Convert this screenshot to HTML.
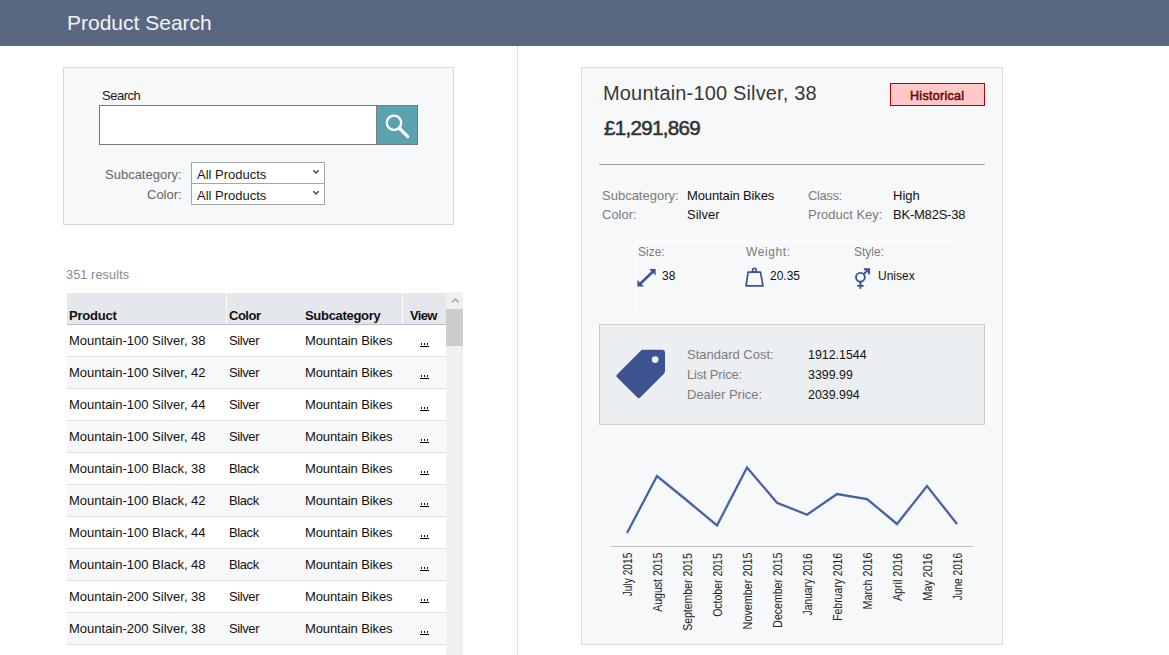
<!DOCTYPE html>
<html><head><meta charset="utf-8"><title>Product Search</title>
<style>
html,body{margin:0;padding:0;}
body{width:1169px;height:655px;overflow:hidden;position:relative;background:#fff;font-family:"Liberation Sans",sans-serif;}
.t{position:absolute;white-space:nowrap;}
.r{position:absolute;box-sizing:border-box;}
svg{position:absolute;}
</style></head><body>
<div class="r" style="left:0px;top:0px;width:1169px;height:46px;background:#5a6782;"></div>
<div class="t" style="left:67px;top:12px;font-size:21px;line-height:21px;color:#f4f4f4;font-weight:400;">Product Search</div>
<div class="r" style="left:517px;top:46px;width:1px;height:609px;background:#dcdcdc;"></div>
<div class="r" style="left:63px;top:67px;width:391px;height:158px;background:#f7f8fa;border:1px solid #d9d9d9;"></div>
<div class="t" style="left:102px;top:89px;font-size:13px;line-height:13px;color:#1a1a1a;font-weight:400;letter-spacing:-0.5px;">Search</div>
<div class="r" style="left:99px;top:105px;width:319px;height:40px;background:#fff;border:1px solid #7a7a7a;"></div>
<div class="r" style="left:376px;top:105px;width:42px;height:40px;background:#59a2ae;border:1px solid #7a7a7a;"></div>
<svg style="left:377px;top:106px" width="40" height="38" viewBox="0 0 40 38"><circle cx="17" cy="16.8" r="7.2" fill="none" stroke="#fff" stroke-width="2.4"/><line x1="22.3" y1="22.3" x2="30.8" y2="30.6" stroke="#fff" stroke-width="3.3" stroke-linecap="round"/></svg>
<div class="t" style="left:105px;top:168px;font-size:13px;line-height:13px;color:#666;font-weight:400;">Subcategory:</div>
<div class="t" style="left:147px;top:188px;font-size:13px;line-height:13px;color:#666;font-weight:400;">Color:</div>
<div class="r" style="left:191px;top:162px;width:134px;height:22px;background:#fff;border:1px solid #a6a6a6;"></div>
<div class="r" style="left:191px;top:183px;width:134px;height:22px;background:#fff;border:1px solid #a6a6a6;"></div>
<div class="t" style="left:197px;top:168px;font-size:13px;line-height:13px;color:#1a1a1a;font-weight:400;">All Products</div>
<div class="t" style="left:197px;top:189px;font-size:13px;line-height:13px;color:#1a1a1a;font-weight:400;">All Products</div>
<svg style="left:312px;top:169px" width="8" height="6" viewBox="0 0 8 6"><polyline points="1.3,1.2 4,3.9 6.7,1.2" fill="none" stroke="#444" stroke-width="1.4"/></svg>
<svg style="left:312px;top:190px" width="8" height="6" viewBox="0 0 8 6"><polyline points="1.3,1.2 4,3.9 6.7,1.2" fill="none" stroke="#444" stroke-width="1.4"/></svg>
<div class="t" style="left:66px;top:269px;font-size:12px;line-height:12px;color:#8a8a8a;font-weight:400;font-size:12.6px;letter-spacing:0.15px;">351 results</div>
<div class="r" style="left:67px;top:293px;width:379px;height:32px;background:#e4e7ec;border-bottom:1px solid #b6bfcd;"></div>
<div class="r" style="left:226px;top:293px;width:1px;height:31px;background:#fff;"></div>
<div class="r" style="left:402px;top:293px;width:1px;height:31px;background:#fff;"></div>
<div class="t" style="left:69px;top:309px;font-size:13px;line-height:13px;color:#111;font-weight:700;letter-spacing:-0.2px;">Product</div>
<div class="t" style="left:229px;top:309px;font-size:13px;line-height:13px;color:#111;font-weight:700;letter-spacing:-0.5px;">Color</div>
<div class="t" style="left:305px;top:309px;font-size:13px;line-height:13px;color:#111;font-weight:700;letter-spacing:-0.3px;">Subcategory</div>
<div class="t" style="left:410px;top:309px;font-size:13px;line-height:13px;color:#111;font-weight:700;letter-spacing:-0.7px;">View</div>
<div class="r" style="left:67px;top:325px;width:379px;height:32px;background:#ffffff;border-bottom:1px solid #e1e1e1;"></div>
<div class="t" style="left:69px;top:334px;font-size:13px;line-height:13px;color:#111;font-weight:400;">Mountain-100 Silver, 38</div>
<div class="t" style="left:229px;top:334px;font-size:13px;line-height:13px;color:#111;font-weight:400;letter-spacing:-0.4px;">Silver</div>
<div class="t" style="left:305px;top:334px;font-size:13px;line-height:13px;color:#111;font-weight:400;letter-spacing:-0.1px;">Mountain Bikes</div>
<div class="r" style="left:421px;top:343px;width:1px;height:2px;background:#300;"></div>
<div class="r" style="left:424px;top:343px;width:1px;height:2px;background:#300;"></div>
<div class="r" style="left:427px;top:343px;width:1px;height:2px;background:#300;"></div>
<div class="r" style="left:420px;top:346px;width:9px;height:1px;background:#000;"></div>
<div class="r" style="left:67px;top:357px;width:379px;height:32px;background:#f7f8fa;border-bottom:1px solid #e1e1e1;"></div>
<div class="t" style="left:69px;top:366px;font-size:13px;line-height:13px;color:#111;font-weight:400;">Mountain-100 Silver, 42</div>
<div class="t" style="left:229px;top:366px;font-size:13px;line-height:13px;color:#111;font-weight:400;letter-spacing:-0.4px;">Silver</div>
<div class="t" style="left:305px;top:366px;font-size:13px;line-height:13px;color:#111;font-weight:400;letter-spacing:-0.1px;">Mountain Bikes</div>
<div class="r" style="left:421px;top:375px;width:1px;height:2px;background:#300;"></div>
<div class="r" style="left:424px;top:375px;width:1px;height:2px;background:#300;"></div>
<div class="r" style="left:427px;top:375px;width:1px;height:2px;background:#300;"></div>
<div class="r" style="left:420px;top:378px;width:9px;height:1px;background:#000;"></div>
<div class="r" style="left:67px;top:389px;width:379px;height:32px;background:#ffffff;border-bottom:1px solid #e1e1e1;"></div>
<div class="t" style="left:69px;top:398px;font-size:13px;line-height:13px;color:#111;font-weight:400;">Mountain-100 Silver, 44</div>
<div class="t" style="left:229px;top:398px;font-size:13px;line-height:13px;color:#111;font-weight:400;letter-spacing:-0.4px;">Silver</div>
<div class="t" style="left:305px;top:398px;font-size:13px;line-height:13px;color:#111;font-weight:400;letter-spacing:-0.1px;">Mountain Bikes</div>
<div class="r" style="left:421px;top:407px;width:1px;height:2px;background:#300;"></div>
<div class="r" style="left:424px;top:407px;width:1px;height:2px;background:#300;"></div>
<div class="r" style="left:427px;top:407px;width:1px;height:2px;background:#300;"></div>
<div class="r" style="left:420px;top:410px;width:9px;height:1px;background:#000;"></div>
<div class="r" style="left:67px;top:421px;width:379px;height:32px;background:#f7f8fa;border-bottom:1px solid #e1e1e1;"></div>
<div class="t" style="left:69px;top:430px;font-size:13px;line-height:13px;color:#111;font-weight:400;">Mountain-100 Silver, 48</div>
<div class="t" style="left:229px;top:430px;font-size:13px;line-height:13px;color:#111;font-weight:400;letter-spacing:-0.4px;">Silver</div>
<div class="t" style="left:305px;top:430px;font-size:13px;line-height:13px;color:#111;font-weight:400;letter-spacing:-0.1px;">Mountain Bikes</div>
<div class="r" style="left:421px;top:439px;width:1px;height:2px;background:#300;"></div>
<div class="r" style="left:424px;top:439px;width:1px;height:2px;background:#300;"></div>
<div class="r" style="left:427px;top:439px;width:1px;height:2px;background:#300;"></div>
<div class="r" style="left:420px;top:442px;width:9px;height:1px;background:#000;"></div>
<div class="r" style="left:67px;top:453px;width:379px;height:32px;background:#ffffff;border-bottom:1px solid #e1e1e1;"></div>
<div class="t" style="left:69px;top:462px;font-size:13px;line-height:13px;color:#111;font-weight:400;">Mountain-100 Black, 38</div>
<div class="t" style="left:229px;top:462px;font-size:13px;line-height:13px;color:#111;font-weight:400;letter-spacing:-0.4px;">Black</div>
<div class="t" style="left:305px;top:462px;font-size:13px;line-height:13px;color:#111;font-weight:400;letter-spacing:-0.1px;">Mountain Bikes</div>
<div class="r" style="left:421px;top:471px;width:1px;height:2px;background:#300;"></div>
<div class="r" style="left:424px;top:471px;width:1px;height:2px;background:#300;"></div>
<div class="r" style="left:427px;top:471px;width:1px;height:2px;background:#300;"></div>
<div class="r" style="left:420px;top:474px;width:9px;height:1px;background:#000;"></div>
<div class="r" style="left:67px;top:485px;width:379px;height:32px;background:#f7f8fa;border-bottom:1px solid #e1e1e1;"></div>
<div class="t" style="left:69px;top:494px;font-size:13px;line-height:13px;color:#111;font-weight:400;">Mountain-100 Black, 42</div>
<div class="t" style="left:229px;top:494px;font-size:13px;line-height:13px;color:#111;font-weight:400;letter-spacing:-0.4px;">Black</div>
<div class="t" style="left:305px;top:494px;font-size:13px;line-height:13px;color:#111;font-weight:400;letter-spacing:-0.1px;">Mountain Bikes</div>
<div class="r" style="left:421px;top:503px;width:1px;height:2px;background:#300;"></div>
<div class="r" style="left:424px;top:503px;width:1px;height:2px;background:#300;"></div>
<div class="r" style="left:427px;top:503px;width:1px;height:2px;background:#300;"></div>
<div class="r" style="left:420px;top:506px;width:9px;height:1px;background:#000;"></div>
<div class="r" style="left:67px;top:517px;width:379px;height:32px;background:#ffffff;border-bottom:1px solid #e1e1e1;"></div>
<div class="t" style="left:69px;top:526px;font-size:13px;line-height:13px;color:#111;font-weight:400;">Mountain-100 Black, 44</div>
<div class="t" style="left:229px;top:526px;font-size:13px;line-height:13px;color:#111;font-weight:400;letter-spacing:-0.4px;">Black</div>
<div class="t" style="left:305px;top:526px;font-size:13px;line-height:13px;color:#111;font-weight:400;letter-spacing:-0.1px;">Mountain Bikes</div>
<div class="r" style="left:421px;top:535px;width:1px;height:2px;background:#300;"></div>
<div class="r" style="left:424px;top:535px;width:1px;height:2px;background:#300;"></div>
<div class="r" style="left:427px;top:535px;width:1px;height:2px;background:#300;"></div>
<div class="r" style="left:420px;top:538px;width:9px;height:1px;background:#000;"></div>
<div class="r" style="left:67px;top:549px;width:379px;height:32px;background:#f7f8fa;border-bottom:1px solid #e1e1e1;"></div>
<div class="t" style="left:69px;top:558px;font-size:13px;line-height:13px;color:#111;font-weight:400;">Mountain-100 Black, 48</div>
<div class="t" style="left:229px;top:558px;font-size:13px;line-height:13px;color:#111;font-weight:400;letter-spacing:-0.4px;">Black</div>
<div class="t" style="left:305px;top:558px;font-size:13px;line-height:13px;color:#111;font-weight:400;letter-spacing:-0.1px;">Mountain Bikes</div>
<div class="r" style="left:421px;top:567px;width:1px;height:2px;background:#300;"></div>
<div class="r" style="left:424px;top:567px;width:1px;height:2px;background:#300;"></div>
<div class="r" style="left:427px;top:567px;width:1px;height:2px;background:#300;"></div>
<div class="r" style="left:420px;top:570px;width:9px;height:1px;background:#000;"></div>
<div class="r" style="left:67px;top:581px;width:379px;height:32px;background:#ffffff;border-bottom:1px solid #e1e1e1;"></div>
<div class="t" style="left:69px;top:590px;font-size:13px;line-height:13px;color:#111;font-weight:400;">Mountain-200 Silver, 38</div>
<div class="t" style="left:229px;top:590px;font-size:13px;line-height:13px;color:#111;font-weight:400;letter-spacing:-0.4px;">Silver</div>
<div class="t" style="left:305px;top:590px;font-size:13px;line-height:13px;color:#111;font-weight:400;letter-spacing:-0.1px;">Mountain Bikes</div>
<div class="r" style="left:421px;top:599px;width:1px;height:2px;background:#300;"></div>
<div class="r" style="left:424px;top:599px;width:1px;height:2px;background:#300;"></div>
<div class="r" style="left:427px;top:599px;width:1px;height:2px;background:#300;"></div>
<div class="r" style="left:420px;top:602px;width:9px;height:1px;background:#000;"></div>
<div class="r" style="left:67px;top:613px;width:379px;height:32px;background:#f7f8fa;border-bottom:1px solid #e1e1e1;"></div>
<div class="t" style="left:69px;top:622px;font-size:13px;line-height:13px;color:#111;font-weight:400;">Mountain-200 Silver, 38</div>
<div class="t" style="left:229px;top:622px;font-size:13px;line-height:13px;color:#111;font-weight:400;letter-spacing:-0.4px;">Silver</div>
<div class="t" style="left:305px;top:622px;font-size:13px;line-height:13px;color:#111;font-weight:400;letter-spacing:-0.1px;">Mountain Bikes</div>
<div class="r" style="left:421px;top:631px;width:1px;height:2px;background:#300;"></div>
<div class="r" style="left:424px;top:631px;width:1px;height:2px;background:#300;"></div>
<div class="r" style="left:427px;top:631px;width:1px;height:2px;background:#300;"></div>
<div class="r" style="left:420px;top:634px;width:9px;height:1px;background:#000;"></div>
<div class="r" style="left:446px;top:292px;width:17px;height:363px;background:#f0f0f0;"></div>
<div class="r" style="left:446px;top:309px;width:17px;height:37px;background:#cdcdcd;"></div>
<svg style="left:450px;top:297px" width="10" height="7" viewBox="0 0 10 7"><polyline points="2,5.4 5.4,2 8.8,5.4" fill="none" stroke="#a3a3a3" stroke-width="1.3"/></svg>
<div class="r" style="left:581px;top:67px;width:422px;height:578px;background:#f7f8fa;border:1px solid #d9d9d9;"></div>
<div class="t" style="left:603px;top:83px;font-size:20px;line-height:20px;color:#383838;font-weight:400;letter-spacing:0.16px;">Mountain-100 Silver, 38</div>
<div class="t" style="left:604px;top:118px;font-size:20px;line-height:20px;color:#333;font-weight:400;font-size:20.6px;letter-spacing:-0.7px;-webkit-text-stroke:0.55px #333;">£1,291,869</div>
<div class="r" style="left:890px;top:83px;width:95px;height:23px;background:#ffc9c9;border:1px solid #c00000;"></div>
<div class="t" style="left:910px;top:90px;font-size:12px;line-height:12px;color:#6a0000;font-weight:400;font-size:12.5px;letter-spacing:0.3px;-webkit-text-stroke:0.5px #6a0000;">Historical</div>
<div class="r" style="left:599px;top:164px;width:386px;height:1px;background:#a0a0a0;"></div>
<div class="t" style="left:602px;top:189px;font-size:13px;line-height:13px;color:#7b7b7b;font-weight:400;">Subcategory:</div>
<div class="t" style="left:602px;top:208px;font-size:13px;line-height:13px;color:#7b7b7b;font-weight:400;">Color:</div>
<div class="t" style="left:687px;top:189px;font-size:13px;line-height:13px;color:#111;font-weight:400;letter-spacing:-0.12px;">Mountain Bikes</div>
<div class="t" style="left:687px;top:208px;font-size:13px;line-height:13px;color:#111;font-weight:400;">Silver</div>
<div class="t" style="left:808px;top:189px;font-size:13px;line-height:13px;color:#7b7b7b;font-weight:400;letter-spacing:-0.4px;">Class:</div>
<div class="t" style="left:808px;top:208px;font-size:13px;line-height:13px;color:#7b7b7b;font-weight:400;">Product Key:</div>
<div class="t" style="left:893px;top:189px;font-size:13px;line-height:13px;color:#111;font-weight:400;">High</div>
<div class="t" style="left:893px;top:208px;font-size:13px;line-height:13px;color:#111;font-weight:400;letter-spacing:-0.22px;">BK-M82S-38</div>
<div class="r" style="left:635px;top:241px;width:320px;height:75px;border:1px solid #ffffff;"></div>
<div class="t" style="left:638px;top:246px;font-size:12px;line-height:12px;color:#7b7b7b;font-weight:400;">Size:</div>
<div class="t" style="left:746px;top:246px;font-size:12px;line-height:12px;color:#7b7b7b;font-weight:400;letter-spacing:0.6px;">Weight:</div>
<div class="t" style="left:854px;top:246px;font-size:12px;line-height:12px;color:#7b7b7b;font-weight:400;">Style:</div>
<div class="t" style="left:662px;top:270px;font-size:12px;line-height:12px;color:#111;font-weight:400;">38</div>
<div class="t" style="left:770px;top:270px;font-size:12px;line-height:12px;color:#111;font-weight:400;">20.35</div>
<div class="t" style="left:878px;top:270px;font-size:12px;line-height:12px;color:#111;font-weight:400;">Unisex</div>
<svg style="left:636px;top:268px" width="22" height="20" viewBox="0 0 22 20"><line x1="4" y1="16" x2="17" y2="3.5" stroke="#3d5391" stroke-width="2.5"/><polygon points="1.4,18.6 1.4,12 8,18.6" fill="#3d5391"/><polygon points="19.6,1.1 13.2,1.1 19.6,7.5" fill="#3d5391"/></svg>
<svg style="left:744px;top:267px" width="21" height="21" viewBox="0 0 21 21"><path d="M4.1 5.2 H16.5 L19 18.9 H2.1 Z" fill="none" stroke="#3d5391" stroke-width="1.75" stroke-linejoin="round"/><circle cx="10.4" cy="3.3" r="1.9" fill="none" stroke="#3d5391" stroke-width="1.6"/></svg>
<svg style="left:853px;top:266px" width="20" height="24" viewBox="0 0 20 24"><circle cx="7.4" cy="11.3" r="4.4" fill="none" stroke="#3d5391" stroke-width="1.9"/><line x1="7.4" y1="15.6" x2="7.4" y2="22.8" stroke="#3d5391" stroke-width="1.9"/><line x1="4.1" y1="19.8" x2="10.7" y2="19.8" stroke="#3d5391" stroke-width="1.8"/><line x1="10.4" y1="8.3" x2="15.6" y2="3.6" stroke="#3d5391" stroke-width="2"/><polyline points="10.8,3.2 16,3.2 16,8.2" fill="none" stroke="#3d5391" stroke-width="2.1" stroke-linejoin="miter"/></svg>
<div class="r" style="left:599px;top:324px;width:386px;height:101px;background:#eceff2;border:1px solid #cdcdcd;"></div>
<svg style="left:612px;top:346px" width="58" height="58" viewBox="0 0 58 58"><path d="M29.8 3.8 H50 Q53 3.8 53 6.8 V25 Q53 26.6 51.9 27.7 L28.2 51.6 Q26.8 53 25.4 51.6 L5 31.2 Q3.6 29.8 5 28.4 Z" fill="#3d5391"/><circle cx="43.2" cy="13.6" r="3.4" fill="#eceff2"/></svg>
<div class="t" style="left:687px;top:348px;font-size:13px;line-height:13px;color:#7b7b7b;font-weight:400;">Standard Cost:</div>
<div class="t" style="left:687px;top:368px;font-size:13px;line-height:13px;color:#7b7b7b;font-weight:400;letter-spacing:-0.2px;">List Price:</div>
<div class="t" style="left:687px;top:388px;font-size:13px;line-height:13px;color:#7b7b7b;font-weight:400;">Dealer Price:</div>
<div class="t" style="left:808px;top:349px;font-size:12px;line-height:12px;color:#111;font-weight:400;font-size:12.4px;">1912.1544</div>
<div class="t" style="left:808px;top:369px;font-size:12px;line-height:12px;color:#111;font-weight:400;font-size:12.4px;">3399.99</div>
<div class="t" style="left:808px;top:389px;font-size:12px;line-height:12px;color:#111;font-weight:400;font-size:12.4px;">2039.994</div>
<svg style="left:600px;top:440px" width="390" height="120" viewBox="0 0 390 120"><line x1="11" y1="106.5" x2="373" y2="106.5" stroke="#c3c3c3" stroke-width="1"/><polyline points="27,93 57,36 87,60.5 117,85.5 147,27.5 177,62.69999999999999 207,74.70000000000005 237,54 267,59 297,84 327,46 357,84" fill="none" stroke="#4662a6" stroke-width="2.3" stroke-linejoin="miter"/></svg>
<div class="r" style="left:627px;top:553px;width:0;height:0;transform-origin:0 0;transform:rotate(-90deg);"><div class="t" style="right:0;top:-5px;font-size:12px;line-height:12px;color:#222;transform-origin:100% 50%;transform:scaleX(0.849);">July 2015</div></div>
<div class="r" style="left:657px;top:553px;width:0;height:0;transform-origin:0 0;transform:rotate(-90deg);"><div class="t" style="right:0;top:-5px;font-size:12px;line-height:12px;color:#222;transform-origin:100% 50%;transform:scaleX(0.879);">August 2015</div></div>
<div class="r" style="left:687px;top:553px;width:0;height:0;transform-origin:0 0;transform:rotate(-90deg);"><div class="t" style="right:0;top:-5px;font-size:12px;line-height:12px;color:#222;transform-origin:100% 50%;transform:scaleX(0.874);">September 2015</div></div>
<div class="r" style="left:717px;top:553px;width:0;height:0;transform-origin:0 0;transform:rotate(-90deg);"><div class="t" style="right:0;top:-5px;font-size:12px;line-height:12px;color:#222;transform-origin:100% 50%;transform:scaleX(0.874);">October 2015</div></div>
<div class="r" style="left:747px;top:553px;width:0;height:0;transform-origin:0 0;transform:rotate(-90deg);"><div class="t" style="right:0;top:-5px;font-size:12px;line-height:12px;color:#222;transform-origin:100% 50%;transform:scaleX(0.899);">November 2015</div></div>
<div class="r" style="left:777px;top:553px;width:0;height:0;transform-origin:0 0;transform:rotate(-90deg);"><div class="t" style="right:0;top:-5px;font-size:12px;line-height:12px;color:#222;transform-origin:100% 50%;transform:scaleX(0.879);">December 2015</div></div>
<div class="r" style="left:807px;top:553px;width:0;height:0;transform-origin:0 0;transform:rotate(-90deg);"><div class="t" style="right:0;top:-5px;font-size:12px;line-height:12px;color:#222;transform-origin:100% 50%;transform:scaleX(0.854);">January 2016</div></div>
<div class="r" style="left:837px;top:553px;width:0;height:0;transform-origin:0 0;transform:rotate(-90deg);"><div class="t" style="right:0;top:-5px;font-size:12px;line-height:12px;color:#222;transform-origin:100% 50%;transform:scaleX(0.87);">February 2016</div></div>
<div class="r" style="left:867px;top:553px;width:0;height:0;transform-origin:0 0;transform:rotate(-90deg);"><div class="t" style="right:0;top:-5px;font-size:12px;line-height:12px;color:#222;transform-origin:100% 50%;transform:scaleX(0.897);">March 2016</div></div>
<div class="r" style="left:897px;top:553px;width:0;height:0;transform-origin:0 0;transform:rotate(-90deg);"><div class="t" style="right:0;top:-5px;font-size:12px;line-height:12px;color:#222;transform-origin:100% 50%;transform:scaleX(0.889);">April 2016</div></div>
<div class="r" style="left:927px;top:553px;width:0;height:0;transform-origin:0 0;transform:rotate(-90deg);"><div class="t" style="right:0;top:-5px;font-size:12px;line-height:12px;color:#222;transform-origin:100% 50%;transform:scaleX(0.902);">May 2016</div></div>
<div class="r" style="left:957px;top:553px;width:0;height:0;transform-origin:0 0;transform:rotate(-90deg);"><div class="t" style="right:0;top:-5px;font-size:12px;line-height:12px;color:#222;transform-origin:100% 50%;transform:scaleX(0.845);">June 2016</div></div>
</body></html>
